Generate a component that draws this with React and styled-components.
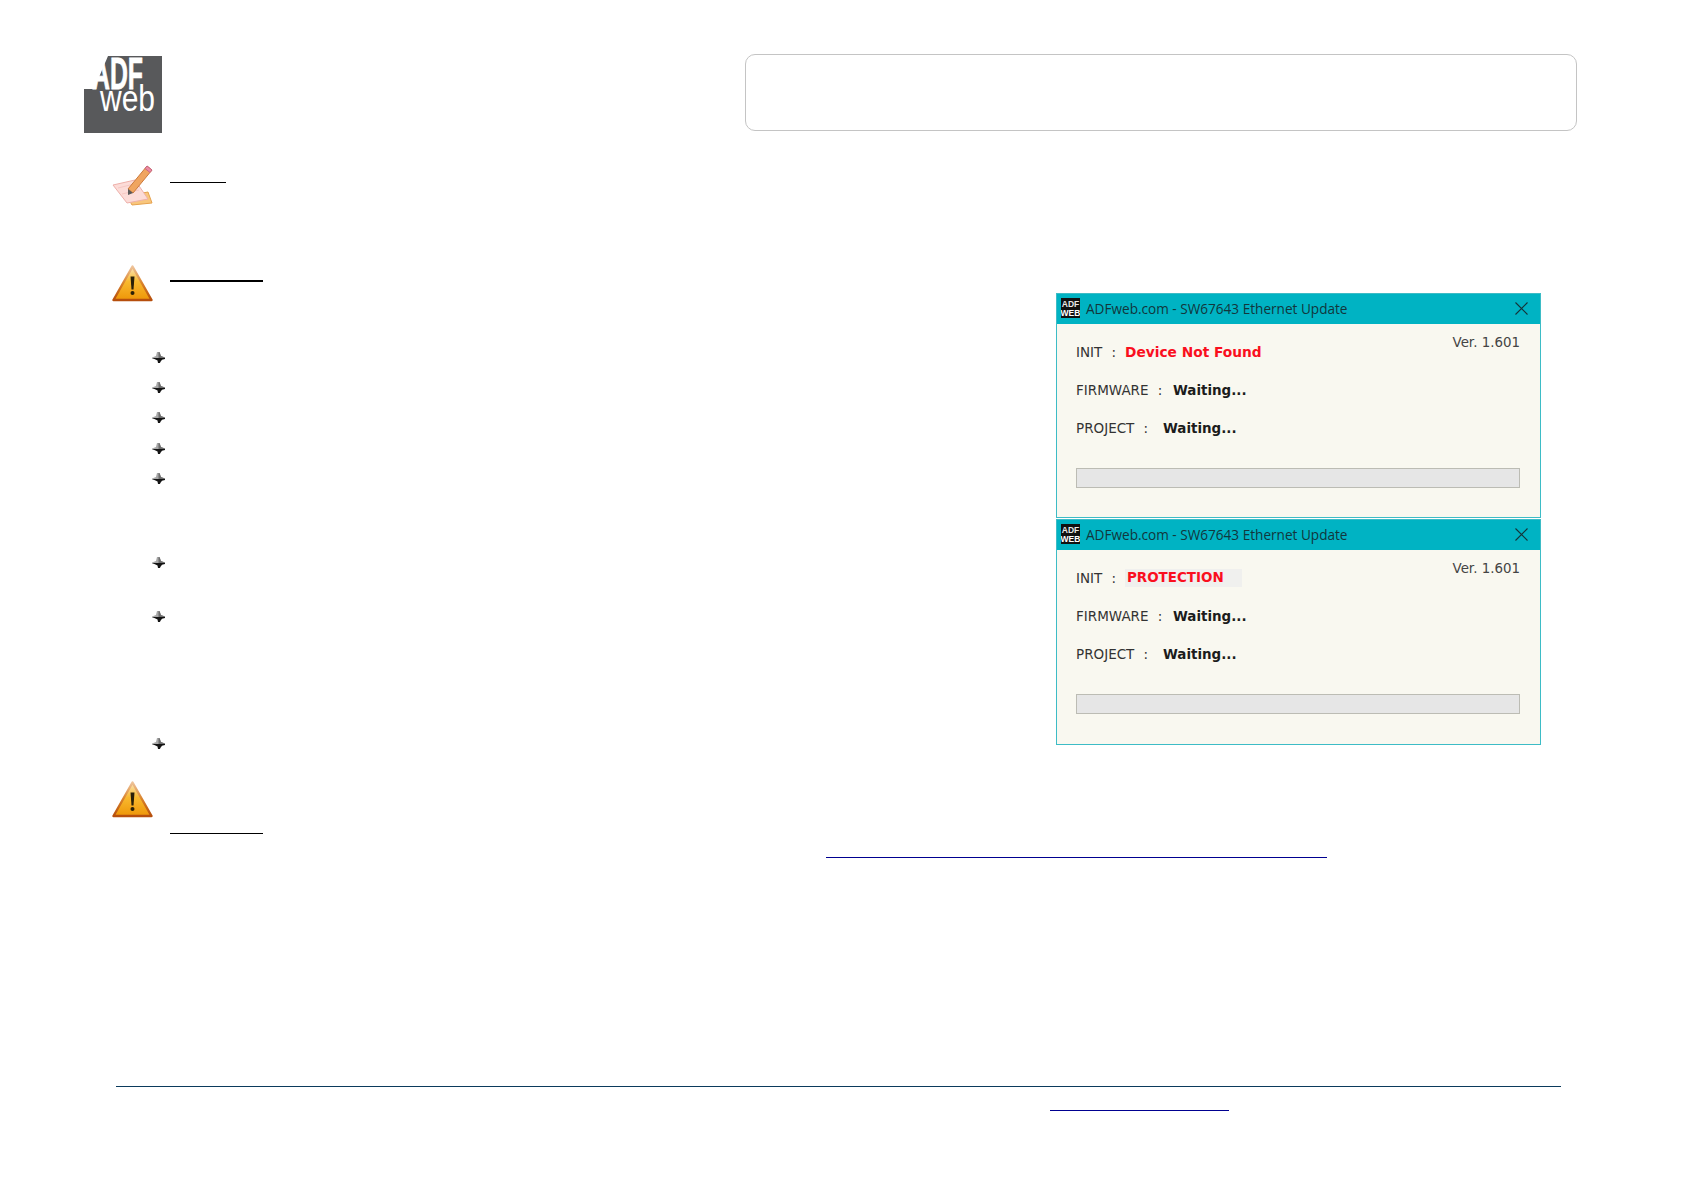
import React from 'react'
import styled, { createGlobalStyle } from 'styled-components'

const GlobalStyle = createGlobalStyle`
  html, body { margin: 0; padding: 0; background: #fff; }
  * { box-sizing: border-box; }
`

const bulletGaps = [30, 30, 31, 30, 84, 54, 127, 13]

const windows = [
  { id: 'notfound', status: 'Device Not Found', size: 13.75, shaded: false, height: 225 },
  { id: 'protection', status: 'PROTECTION', size: 13.45, shaded: true, height: 226 },
]

const Logo = () => (
  <LogoSvg viewBox="0 0 78 77" aria-label="ADFweb logo">
    <rect width="78" height="77" fill="#58595b" />
    <polygon points="0,0 24,0 10,33 0,33" fill="#fff" />
    <text x="8" y="32.5" fill="#fff" stroke="#fff" strokeWidth="0.8" fontFamily="'Liberation Sans', sans-serif" fontWeight="700" fontSize="44" textLength="51" lengthAdjust="spacingAndGlyphs">ADF</text>
    <text x="16" y="55" fill="#fff" fontFamily="'Liberation Sans', sans-serif" fontSize="37" textLength="55" lengthAdjust="spacingAndGlyphs">web</text>
  </LogoSvg>
)

const NoteIcon = () => (
  <IconSvg width="41" height="41" viewBox="0 0 41 41">
    <polygon points="15,31 36,27 40,38 20,40" fill="#f8c67c" stroke="#e6a24e" strokeWidth="1" />
    <polygon points="1,20 23,15 36,34 15,38" fill="#fcdcd8" stroke="#eeb0aa" strokeWidth="1" />
    <line x1="6" y1="23" x2="22" y2="19" stroke="#f6c8c3" strokeWidth="1" />
    <line x1="10" y1="29" x2="27" y2="25" stroke="#f6c8c3" strokeWidth="1" />
    <polygon points="35,1 40,5 21,28 16,24" fill="#f0a560" stroke="#cb7a3c" strokeWidth="1" />
    <polygon points="35,1 40,5 38,7.5 33,3.5" fill="#ee8ba4" stroke="#c76a84" strokeWidth="1" />
    <polygon points="16,24 21,28 16,30" fill="#5a5a5a" />
  </IconSvg>
)

const WarnIcon = ({ id }) => (
  <IconSvg width="41" height="37" viewBox="0 0 41 37">
    <defs>
      <linearGradient id={id} x1="0" y1="0" x2="0" y2="1">
        <stop offset="0" stopColor="#fbe6bd" />
        <stop offset="0.45" stopColor="#f8b92f" />
        <stop offset="1" stopColor="#ee9608" />
      </linearGradient>
      <linearGradient id={`${id}Rim`} x1="0" y1="0" x2="0" y2="1">
        <stop offset="0" stopColor="#eec39a" />
        <stop offset="0.5" stopColor="#d9822a" />
        <stop offset="1" stopColor="#b64e0c" />
      </linearGradient>
    </defs>
    <polygon points="20.5,1.5 39.5,35 1.5,35" fill={`url(#${id})`} stroke={`url(#${id}Rim)`} strokeWidth="2.4" strokeLinejoin="round" />
    <path d="M18.5 11.5h4l-1 13h-2z" fill="#2a2008" />
    <circle cx="20.5" cy="28" r="2" fill="#2a2008" />
  </IconSvg>
)

const BulletIcon = () => (
  <BulletSvg viewBox="0 0 13 11">
    <path d="M5 0h2.5l1.5 4 4 1.5v1l-13 0v-1l4-1.5z" fill="#a8a8a8" />
    <path d="M6.5 0h1l1.5 4 4 1.5v1h-6.500z" fill="#6e6e6e" />
    <path d="M0 6h13v1l-3 .8-1.700 2.200-.3 1h-2l-.5-2.500-2-1z" fill="#141414" />
  </BulletSvg>
)

const AppBadge = () => (
  <IconSvg width="19" height="20" viewBox="0 0 19 20">
    <rect width="19" height="20" fill="#111" />
    <text x="9.5" y="8.500" textAnchor="middle" fill="#e8e8e8" fontFamily="'Liberation Sans', sans-serif" fontWeight="700" fontSize="8.500">ADF</text>
    <text x="9.5" y="17.500" textAnchor="middle" fill="#fff" fontFamily="'Liberation Sans', sans-serif" fontWeight="700" fontSize="8.500">WEB</text>
  </IconSvg>
)

const CloseIcon = () => (
  <IconSvg width="13" height="13" viewBox="0 0 13 13">
    <path d="M0.5 0.5l12 12M12.5 0.5l-12 12" stroke="#143338" strokeWidth="1.1" fill="none" />
  </IconSvg>
)

const UpdateWindow = ({ status, size, shaded, height }) => (
  <Window $height={height}>
    <TitleBar>
      <AppBadge />
      <Title>ADFweb.com - SW67643 Ethernet Update</Title>
      <CloseIcon />
    </TitleBar>
    <WindowBody>
      <TopArea>
        <StatusRows>
          <StatusRow>
            <Label $w={49}>INIT :</Label>
            <Value $alert $size={size} $shaded={shaded}>{status}</Value>
          </StatusRow>
          <StatusRow>
            <Label $w={97}>FIRMWARE :</Label>
            <Value>Waiting...</Value>
          </StatusRow>
          <StatusRow>
            <Label $w={87}>PROJECT :</Label>
            <Value>Waiting...</Value>
          </StatusRow>
        </StatusRows>
        <Version>Ver. 1.601</Version>
      </TopArea>
      <ProgressBar />
    </WindowBody>
  </Window>
)

const App = () => (
  <Page>
    <GlobalStyle />
    <Header>
      <Logo />
      <HeaderBox />
    </Header>
    <Columns>
      <LeftColumn>
        <IconRow>
          <NoteIcon />
          <Rule $width={56} $top={17} />
        </IconRow>
        <IconRow $top={59}>
          <WarnIcon id="warnFillTop" />
          <Rule $width={93} $top={15} $weight={2} />
        </IconRow>
        <BulletList>
          {bulletGaps.map((gap, i) => (
            <BulletItem key={i} $height={gap}>
              <BulletIcon />
            </BulletItem>
          ))}
        </BulletList>
      </LeftColumn>
      <RightColumn>
        {windows.map(w => (
          <UpdateWindow key={w.id} status={w.status} size={w.size} shaded={w.shaded} height={w.height} />
        ))}
      </RightColumn>
    </Columns>
    <LastSection>
      <WarnIcon id="warnFillBottom" />
      <RuleStack>
        <Rule $width={93} $top={52} />
        <Rule $width={501} $top={23} $left={656} $color="#000090" />
      </RuleStack>
    </LastSection>
    <Footer>
      <Rule $width={179} $top={23} $left={934} $color="#000090" />
    </Footer>
  </Page>
)

const Page = styled.div`
  width: 1684px;
  height: 1190px;
  display: flex;
  flex-direction: column;
  overflow: hidden;
  background: #fff;
`

const Header = styled.header`
  display: flex;
  justify-content: space-between;
  align-items: flex-start;
  padding: 54px 107px 0 84px;
  height: 131px;
`

const LogoSvg = styled.svg`
  display: block;
  width: 78px;
  height: 77px;
  margin-top: 2px;
`

const HeaderBox = styled.div`
  width: 832px;
  height: 77px;
  border: 1px solid #c4c4c4;
  border-radius: 10px;
`

const Columns = styled.main`
  display: grid;
  grid-template-columns: 944px 485px;
  padding-left: 112px;
`

const LeftColumn = styled.div`
  display: flex;
  flex-direction: column;
  padding-top: 34px;
`

const RightColumn = styled.div`
  display: flex;
  flex-direction: column;
  gap: 1px;
  padding-top: 162px;
`

const IconRow = styled.section`
  display: flex;
  gap: 17px;
  margin-top: ${p => p.$top || 0}px;
`

const IconSvg = styled.svg`
  display: block;
  flex: none;
`

const Rule = styled.div`
  flex: none;
  width: ${p => p.$width}px;
  height: ${p => p.$weight || 1}px;
  margin-top: ${p => p.$top || 0}px;
  margin-left: ${p => p.$left || 0}px;
  background: ${p => p.$color || '#000'};
`

const RuleStack = styled.div`
  display: flex;
  flex-direction: column;
`

const BulletList = styled.ul`
  list-style: none;
  margin: 50px 0 0;
  padding: 0 0 0 40px;
`

const BulletItem = styled.li`
  height: ${p => p.$height}px;
`

const BulletSvg = styled.svg`
  display: block;
  width: 13px;
  height: 11px;
`

const Window = styled.article`
  height: ${p => p.$height}px;
  display: flex;
  flex-direction: column;
  border: 1px solid #3dbcc6;
  background: #f9f8f0;
`

const TitleBar = styled.div`
  flex: none;
  height: 30px;
  display: flex;
  align-items: center;
  gap: 6px;
  padding: 0 12px 2px 4px;
  background: #00b3c3;
`

const Title = styled.span`
  flex: 1;
  font: 13.6px 'Open Sans', sans-serif;
  color: #12363c;
`

const WindowBody = styled.div`
  display: flex;
  flex-direction: column;
  padding: 10px 20px 0 19px;
`

const TopArea = styled.div`
  display: flex;
  justify-content: space-between;
  align-items: flex-start;
`

const StatusRows = styled.div`
  display: flex;
  flex-direction: column;
  gap: 20px;
  padding-top: 9px;
`

const StatusRow = styled.div`
  display: flex;
  align-items: center;
  height: 18px;
`

const Label = styled.span`
  width: ${p => p.$w}px;
  font: 13.5px 'DejaVu Sans', sans-serif;
  word-spacing: 5px;
  color: #333;
`

const Value = styled.span`
  font: 700 ${p => p.$size || 13.45}px 'DejaVu Sans', sans-serif;
  color: ${p => (p.$alert ? '#fa0f1e' : '#1c1c1c')};
  ${p => p.$shaded && 'background: #f0f0ee; width: 117px; padding-left: 2px; line-height: 18px;'}
`

const Version = styled.span`
  font: 13.4px 'DejaVu Sans', sans-serif;
  color: #444;
  line-height: 18px;
`

const ProgressBar = styled.div`
  height: 20px;
  margin-top: 31px;
  background: #e6e6e6;
  border: 1px solid #bcbcb4;
`

const LastSection = styled.section`
  display: flex;
  gap: 17px;
  padding-left: 112px;
  margin-top: 30px;
`

const Footer = styled.footer`
  margin: auto 0 0 116px;
  width: 1445px;
  height: 104px;
  border-top: 1px solid #0b3a5c;
  display: flex;
  flex-direction: column;
`

export default App
